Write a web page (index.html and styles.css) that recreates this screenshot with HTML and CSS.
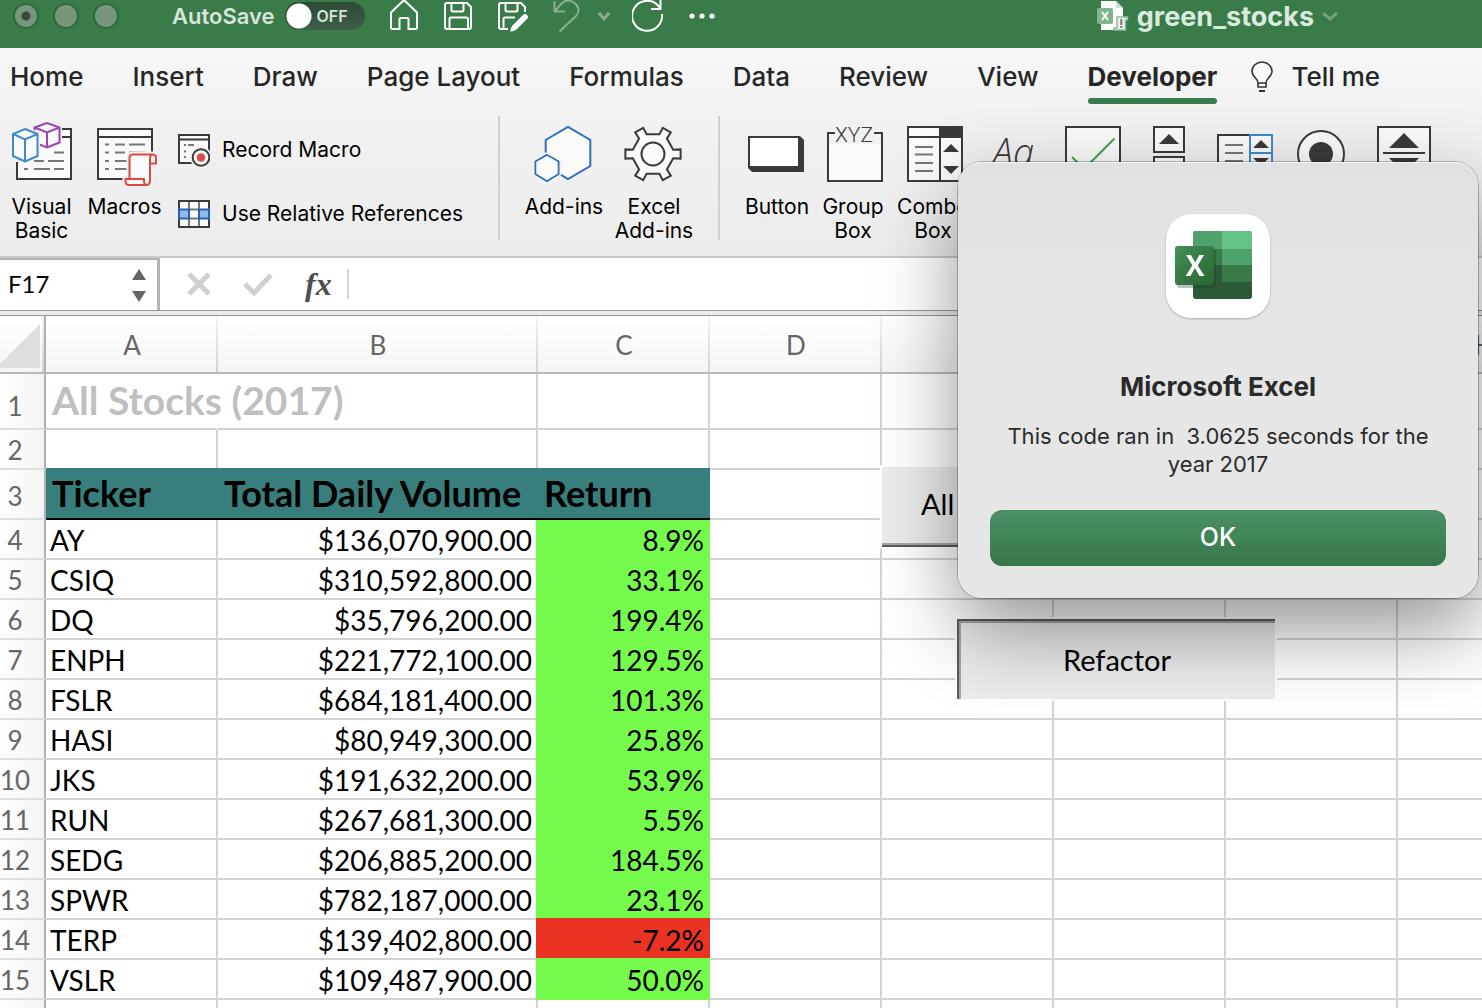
FILE: index.html
```html
<!DOCTYPE html>
<html lang="en">
<head>
<meta charset="utf-8">
<title>green_stocks</title>
<link rel="stylesheet" href="styles.css">
</head>
<body>
<header class="titlebar">
  <div class="lights">
    <button class="light light-close" aria-label="Close"></button>
    <button class="light" aria-label="Minimize"></button>
    <button class="light" aria-label="Zoom"></button>
  </div>
  <div class="autosave">
    <label for="autosave">AutoSave</label>
    <span class="toggle"><input type="checkbox" id="autosave"><span class="toggle-text">OFF</span></span>
  </div>
  <div class="quick">
    <button aria-label="Home"><svg width="32" height="32" viewBox="0 0 32 32"><path d="M3 12.500L16 0L29 12.500V27.500Q29 29 27.500 29H20.500V19Q20.500 18 19.500 18H12.500Q11.500 18 11.500 19V29H4.500Q3 29 3 27.500Z"/></svg></button>
    <button aria-label="Save"><svg width="32" height="32" viewBox="0 0 32 32"><path d="M5 3H25L29 7V27Q29 29 27 29H5Q3 29 3 27V5Q3 3 5 3ZM9.500 3V10Q9.500 11.500 11 11.500H20Q21.500 11.500 21.500 10V3M7.500 29V19Q7.500 17.500 9 17.500H24.500Q26 17.500 26 19V29"/></svg></button>
    <button aria-label="Save as"><svg width="32" height="32" viewBox="0 0 32 32"><path d="M12 29H5Q3 29 3 27V5Q3 3 5 3H25L29 7V12M9.500 3V10Q9.500 11.500 11 11.500H20Q21.500 11.500 21.500 10V3M7.500 29V19Q7.500 17.500 9 17.500H19"/><path class="solid" d="M27 15Q29 13 31 15Q33 17 31 19L20.500 29.500Q17 32 14.500 31.500Q14 29 16.500 25.500Z"/></svg></button>
    <div class="undo">
      <button aria-label="Undo"><svg width="32" height="32" viewBox="0 0 32 32"><path d="M4.500 1V11.500H15M5 11L11 4Q17-2 24 2.500Q32 9 26 16L9.500 31.500"/></svg></button>
      <button aria-label="Undo history"><svg width="12" height="32" viewBox="0 0 12 32"><path d="M1 13L6 19L11 13" stroke-width="3"/></svg></button>
    </div>
    <button aria-label="Redo"><svg width="32" height="32" viewBox="0 0 32 32"><path d="M30 14A15 15 0 1 1 26 5.500L28.500 8.500M28.500 0V9H19"/></svg></button>
    <button aria-label="More"><svg width="32" height="32" viewBox="0 0 32 32"><g class="solid"><circle cx="6" cy="16" r="2.600"/><circle cx="16" cy="16" r="2.600"/><circle cx="26" cy="16" r="2.600"/></g></svg></button>
  </div>
  <div class="docname">
    <svg width="32" height="32" viewBox="0 0 32 32"><path fill="#fff" d="M4 1H19L26 8V30H4Z"/><path fill="#cfdfd2" d="M19 1L26 8H19Z"/><rect y="8" width="16" height="16" rx="1.500" fill="#7fb58e"/><path d="M5 12L11 20M11 12L5 20" stroke="#fff" stroke-width="2"/><path d="M21 17H30.500V20H28.500V30H17V28H20V17Z" fill="#e9f2eb" stroke="#8fbf9c" stroke-width="1.500"/><path d="M24.300 19V25M24.300 26V28" stroke="#777" stroke-width="2"/></svg>
    <span>green_stocks</span>
    <svg width="16" height="32" viewBox="0 0 16 32"><path d="M1 13L8 19L15 13" fill="none" stroke="#6fa17c" stroke-width="3"/></svg>
  </div>
</header>

<nav class="tabs">
  <button>Home</button>
  <button>Insert</button>
  <button>Draw</button>
  <button>Page Layout</button>
  <button>Formulas</button>
  <button>Data</button>
  <button>Review</button>
  <button>View</button>
  <button class="active">Developer</button>
  <button class="tellme"><svg width="22" height="32" viewBox="0 0 22 32"><path d="M7 22C7 17 1 16 1 10.500A10 9.500 0 0 1 21 10.500C21 16 15 17 15 22ZM7 22V26H15V22" fill="#fafafa" stroke="#333" stroke-width="1.600"/><path d="M8 30H14" stroke="#333" stroke-width="2"/></svg>Tell me</button>
</nav>

<div class="ribbon">
  <div class="group group-code">
    <button class="tool"><svg class="icon" viewBox="0 0 64 64"><path fill="#fafafa" d="M7 7H61V57H7Z"/><path class="ink" d="M52 7H61V57H7V40M52 15H61"/><path class="lines" d="M44 30.500H54M24 39H34M38 39H54M14 47H18M24 47H40M44 47H54"/><path d="M37 1L49.500 5.500V20.500L37 25.500L24.500 20.500V5.500ZM24.500 5.500L37 10.500L49.500 5.500M37 10.500V25.500" stroke="#f1f1f1" stroke-width="5"/><path d="M37 1L49.500 5.500V20.500L37 25.500L24.500 20.500V5.500ZM24.500 5.500L37 10.500L49.500 5.500M37 10.500V25.500" fill="#fafafa" stroke="#9c47b0" stroke-width="2"/><path d="M15 7L27.500 12V34L15 39.500L3 34V12Z" stroke="#f1f1f1" stroke-width="5"/><path d="M15 7L27.500 12V34L15 39.500L3 34V12ZM3 12L15 17.500L27.500 12M15 17.500V39.500" fill="#fafafa" stroke="#3d8acb" stroke-width="2"/></svg><span>Visual<br>Basic</span></button>
    <button class="tool"><svg class="icon" viewBox="0 0 64 64"><path class="ink" fill="#fafafa" d="M5 7H59V57H5ZM5 15H59"/><path class="lines" d="M12 22.500H16M22 22.500H32M36 22.500H52M12 30.500H16M22 30.500H32M36 30.500H52M12 39H16M22 39H34M12 47H16M22 47H34"/><path d="M40 32.500H60Q63 33 63 36V41.500H57V59Q57 63 53 63H36Q32.500 63 32.500 59V57H36.500V36Q36.500 32.500 40 32.500Z" fill="#f1f1f1" stroke="#f1f1f1" stroke-width="6"/><path d="M40 32.500H60Q63 33 63 36V41.500H57V59Q57 63 53 63H36Q32.500 63 32.500 59V57H36.500V36Q36.500 32.500 40 32.500ZM57 41.500V36Q57 33 60 32.500M36.500 57H51V59Q51 63 54 63" fill="#fafafa" stroke="#dc4a43" stroke-width="2"/></svg><span>Macros</span></button>
    <div class="stack">
      <button class="row-tool"><svg width="32" height="34" viewBox="0 0 32 34"><path class="ink" fill="#fafafa" d="M1 2H31V30H1ZM1 6.500H31"/><path class="lines" d="M6 12H8M10 12H16M6 18.500H8M6 24H8"/><circle cx="23" cy="24.500" r="11" fill="#f1f1f1"/><circle cx="23" cy="24.500" r="8.300" class="ink" fill="#fafafa"/><circle cx="23" cy="24.500" r="4.200" fill="#dc4a43"/></svg>Record Macro</button>
      <button class="row-tool"><svg width="32" height="32" viewBox="0 0 32 32"><path fill="#fafafa" d="M1 3H31V29H1Z"/><path class="lines" d="M11 3V29M21 3V29M11 11.500H21M11 20.500H21"/><path class="ink" d="M1 3H31V29H1Z"/><path d="M1 11.500H11V20.500H1ZM21 11.500H31V20.500H21Z" fill="#92bce8" stroke="#2763b2" stroke-width="2"/></svg>Use Relative References</button>
    </div>
  </div>
  <div class="group group-addins">
    <button class="tool"><svg class="icon" viewBox="0 0 64 64"><path fill="#fafafa" d="M36 5L58 18V44L36 57L14 44V18Z"/><path fill="#f1f1f1" d="M15 29L30 38V56L15 64L0 56V38Z"/><path d="M13.700 30.500V18L36 5L58.300 18V44L36 57L29 52.800M15 33L26.500 39.500V52L15 59L3.500 52V39.500Z" fill="none" stroke="#2f6ebd" stroke-width="2"/><path d="M15 34L25.500 40V51.500L15 58L4.500 51.500V40Z" fill="#fafafa"/></svg><span>Add-ins</span></button>
    <button class="tool"><svg class="icon" viewBox="0 0 64 64"><g transform="translate(31 32)" class="ink" fill="#fafafa"><path d="M20.200-4.300L27.600-4.600V4.600L20.200 4.300L13.900 15.400L17.800 21.600L9.800 26.200L6.400 19.700H-6.400L-9.800 26.200L-17.800 21.600L-13.900 15.400L-20.200 4.300L-27.600 4.600V-4.600L-20.200-4.300L-13.900-15.400L-17.800-21.600L-9.800-26.200L-6.400-19.700H6.400L9.800-26.200L17.800-21.600L13.900-15.400Z"/><circle r="11.500"/></g></svg><span>Excel<br>Add-ins</span></button>
  </div>
  <div class="group group-controls">
    <button class="tool"><svg class="icon" viewBox="0 0 64 64"><path fill="#3a3a38" d="M3 14H55L59 18V50H7L3 46Z"/><path fill="#fff" d="M5 16H53V44H5Z"/></svg><span>Button</span></button>
    <button class="tool"><svg class="icon" viewBox="0 0 64 64"><path fill="#fafafa" d="M7 22H61V59H7Z"/><path class="ink" d="M14 11H7V59H61V11H53"/><text x="33" y="20" class="xyz">XYZ</text></svg><span>Group<br>Box</span></button>
    <button class="tool tool-wide"><svg class="icon" viewBox="0 0 64 64"><path class="ink" fill="#fafafa" d="M7 5H61V59H7ZM7 15H61M39 5V59"/><path fill="#3a3a38" d="M38 4H62V16H38ZM50 22L58 30H42ZM42 44H58L50 52Z"/><path class="lines" d="M14 25H32M14 32.500H32M14 41H32M14 49H32"/></svg><span>Combo<br>Box</span></button>
    <button class="tool tool-wide" aria-label="Label"><svg class="icon" viewBox="0 0 64 64"><text x="7" y="44" class="aa">Aa</text></svg></button>
    <button class="tool tool-narrow" aria-label="Check Box"><svg class="icon" viewBox="0 0 64 64"><path class="ink" fill="#fafafa" d="M5 5H59V59H5Z"/><path d="M11 35L23 47L53.500 16.500" fill="none" stroke="#4c9c54" stroke-width="2"/></svg></button>
    <button class="tool tool-wide" aria-label="Scroll Bar"><svg class="icon" viewBox="0 0 64 64"><path class="ink" fill="#fafafa" d="M17 5H47V30H17ZM17 35H47V59H17Z"/><path fill="#3a3a38" d="M32 12L42 22H22Z"/></svg></button>
    <button class="tool tool-narrow" aria-label="List Box"><svg class="icon" viewBox="0 0 64 64"><path class="ink" fill="#fafafa" d="M37 13H5V59H37"/><path class="lines" d="M12 23H30M12 31H30M12 39H30"/><path d="M37 13H59V59H37ZM37 31H59" fill="#fafafa" stroke="#3d8acb" stroke-width="2"/><path fill="#3a3a38" d="M48 18L56 26H40ZM40 36H56L48 44Z"/></svg></button>
    <button class="tool tool-wide" aria-label="Option Button"><svg class="icon" viewBox="0 0 64 64"><circle class="ink" fill="#fafafa" cx="32" cy="32" r="23"/><circle fill="#3a3a38" cx="32" cy="32" r="12"/></svg></button>
    <button class="tool tool-wide" aria-label="Spinner"><svg class="icon" viewBox="0 0 64 64"><path class="ink" fill="#fafafa" d="M5 5H57V59H5ZM10 31H52"/><path fill="#3a3a38" d="M31 11L46 26H16ZM16 36H46L31 51Z"/></svg></button>
  </div>
</div>

<div class="formula-bar">
  <div class="namebox">
    <input type="text" value="F17" aria-label="Name box">
    <button aria-label="Recent names"><svg width="16" height="36" viewBox="0 0 16 36"><path fill="#666" d="M8 2L15 13H1ZM1 24H15L8 35Z"/></svg></button>
  </div>
  <button aria-label="Cancel"><svg width="32" height="32" viewBox="0 0 32 32"><path d="M4 6L24 26M24 6L4 26" stroke="#d0d0d0" stroke-width="5"/></svg></button>
  <button aria-label="Enter"><svg width="32" height="32" viewBox="0 0 32 32"><path d="M3 16L12 25L29 7" fill="none" stroke="#d0d0d0" stroke-width="5"/></svg></button>
  <button class="fx" aria-label="Insert function">fx</button>
  <input class="formula" type="text" aria-label="Formula">
</div>

<main class="sheet">
  <table>
    <colgroup><col class="c-head"><col class="c-std"><col class="c-wide"><col class="c-std"><col class="c-std"><col class="c-std"><col class="c-std"><col class="c-std"><col class="c-std"></colgroup>
    <thead>
      <tr><td class="corner"><svg width="40" height="44" viewBox="0 0 40 44"><path fill="#dedede" d="M40 0V44H0V40Z"/></svg></td><th scope="col">A</th><th scope="col">B</th><th scope="col">C</th><th scope="col">D</th><th scope="col">E</th><th scope="col">F</th><th scope="col">G</th><th scope="col">H</th></tr>
    </thead>
    <tbody>
      <tr class="r-title"><th scope="row">1</th><td class="title">All Stocks (2017)</td><td></td><td></td><td></td><td></td><td></td><td></td><td></td></tr>
      <tr><th scope="row">2</th><td></td><td></td><td></td><td></td><td></td><td></td><td></td><td></td></tr>
      <tr class="r-heads"><th scope="row">3</th><td class="head">Ticker</td><td class="head">Total Daily Volume</td><td class="head">Return</td><td></td><td></td><td></td><td></td><td></td></tr>
      <tr><th scope="row">4</th><td>AY</td><td class="num">$136,070,900.00</td><td class="num up">8.9%</td><td></td><td></td><td></td><td></td><td></td></tr>
      <tr><th scope="row">5</th><td>CSIQ</td><td class="num">$310,592,800.00</td><td class="num up">33.1%</td><td></td><td></td><td></td><td></td><td></td></tr>
      <tr><th scope="row">6</th><td>DQ</td><td class="num">$35,796,200.00</td><td class="num up">199.4%</td><td></td><td></td><td></td><td></td><td></td></tr>
      <tr><th scope="row">7</th><td>ENPH</td><td class="num">$221,772,100.00</td><td class="num up">129.5%</td><td></td><td></td><td></td><td></td><td></td></tr>
      <tr><th scope="row">8</th><td>FSLR</td><td class="num">$684,181,400.00</td><td class="num up">101.3%</td><td></td><td></td><td></td><td></td><td></td></tr>
      <tr><th scope="row">9</th><td>HASI</td><td class="num">$80,949,300.00</td><td class="num up">25.8%</td><td></td><td></td><td></td><td></td><td></td></tr>
      <tr><th scope="row">10</th><td>JKS</td><td class="num">$191,632,200.00</td><td class="num up">53.9%</td><td></td><td></td><td></td><td></td><td></td></tr>
      <tr><th scope="row">11</th><td>RUN</td><td class="num">$267,681,300.00</td><td class="num up">5.5%</td><td></td><td></td><td></td><td></td><td></td></tr>
      <tr><th scope="row">12</th><td>SEDG</td><td class="num">$206,885,200.00</td><td class="num up">184.5%</td><td></td><td></td><td></td><td></td><td></td></tr>
      <tr><th scope="row">13</th><td>SPWR</td><td class="num">$782,187,000.00</td><td class="num up">23.1%</td><td></td><td></td><td></td><td></td><td></td></tr>
      <tr class="r-down"><th scope="row">14</th><td>TERP</td><td class="num">$139,402,800.00</td><td class="num down">-7.2%</td><td></td><td></td><td></td><td></td><td></td></tr>
      <tr><th scope="row">15</th><td>VSLR</td><td class="num">$109,487,900.00</td><td class="num up">50.0%</td><td></td><td></td><td></td><td></td><td></td></tr>
      <tr><th scope="row"></th><td></td><td></td><td></td><td></td><td></td><td></td><td></td><td></td></tr>
    </tbody>
  </table>
  <button class="sheet-button all-button">All</button>
  <button class="sheet-button refactor-button">Refactor</button>
</main>

<section class="alert" role="alertdialog" aria-labelledby="alert-title" aria-describedby="alert-text">
  <svg class="app-icon" width="104" height="104" viewBox="0 0 104 104">
    <defs><linearGradient id="badge" x1="0" y1="0" x2="1" y2="1"><stop offset="0" stop-color="#438f57"/><stop offset="1" stop-color="#296531"/></linearGradient><clipPath id="book"><rect x="27" y="17" width="59" height="68" rx="3"/></clipPath></defs>
    <rect width="104" height="104" rx="25" fill="#fff"/>
    <g clip-path="url(#book)"><path fill="#2c5a38" d="M27 17H86V85H27Z"/><path fill="#4fa26c" d="M27 17H56V35H27ZM56 35H86V51H56Z"/><path fill="#65c286" d="M56 17H86V35H56Z"/><path fill="#397a49" d="M27 35H56V51H27ZM56 51H86V68H56Z"/></g>
    <rect x="11" y="35" width="39" height="39" rx="3" fill="#1c3d22" opacity=".3"/>
    <rect x="9" y="32" width="39" height="39" rx="3" fill="url(#badge)"/>
    <text x="29" y="62" class="badge-text">X</text>
  </svg>
  <h1 id="alert-title">Microsoft Excel</h1>
  <p id="alert-text">This code ran in&nbsp; 3.0625 seconds for the year 2017</p>
  <button class="ok">OK</button>
</section>
</body>
</html>
```
FILE: styles.css
```css
* { box-sizing: border-box; }

body {
  margin: 0;
  height: 100vh;
  overflow: hidden;
  background: #fff;
  font-family: Inter, "Liberation Sans", sans-serif;
  color: #000;
}

button, input {
  font: inherit;
  color: inherit;
  margin: 0;
  padding: 0;
  border: 0;
  background: none;
}

svg { display: block; flex: none; }

/* Title bar */
.titlebar {
  display: flex;
  align-items: center;
  height: 48px;
  padding: 0 144px 16px 13px;
  background: #397b49;
}
.lights { display: flex; gap: 14px; }
.light {
  width: 26px;
  height: 26px;
  border-radius: 50%;
  border: 2px solid #2f6a3c;
  background: #76977e;
}
.light-close { background: radial-gradient(circle, #36483a 4px, #76977e 5px); }
.autosave {
  display: flex;
  align-items: center;
  gap: 10px;
  margin-left: 53px;
  font-size: 22px;
  font-weight: 600;
  color: #d7e5da;
}
.toggle { position: relative; width: 80px; height: 28px; }
.toggle input {
  display: block;
  appearance: none;
  width: 80px;
  height: 28px;
  border-radius: 14px;
  background: radial-gradient(circle at 14px 14px, #fff 12px, transparent 13px), linear-gradient(#2a4a33, #3f5f48);
}
.toggle-text {
  position: absolute;
  left: 32px;
  top: 0;
  font-size: 16px;
  line-height: 28px;
  pointer-events: none;
}
.quick { display: flex; align-items: center; gap: 22px; margin-left: 23px; }
.quick svg { fill: none; stroke: #fff; stroke-width: 2; }
.quick .solid { fill: #fff; stroke: none; }
.undo { display: flex; gap: 16px; opacity: .4; }
.docname {
  display: flex;
  align-items: center;
  gap: 8px;
  margin-left: auto;
  font-size: 27px;
  font-weight: 700;
  color: #dceadf;
}

/* Ribbon tabs */
.tabs {
  display: flex;
  align-items: flex-start;
  gap: 49px;
  height: 62px;
  padding: 8px 10px 0;
  background: linear-gradient(#f7f7f7, #f2f2f2);
  font-size: 26px;
  line-height: 42px;
  font-weight: 500;
  color: #262626;
  white-space: nowrap;
}
.tabs .active { font-weight: 700; }
.tabs .active::after {
  content: "";
  display: block;
  height: 6px;
  border-radius: 3px;
  background: #397b49;
}
.tabs .tellme { display: flex; align-items: center; gap: 18px; margin-left: -15px; }

/* Ribbon */
.ribbon {
  display: flex;
  height: 148px;
  padding-top: 6px;
  border-bottom: 2px solid #c9c9c9;
  background: linear-gradient(#f2f2f2, #ececec);
  font-size: 21px;
  line-height: 24px;
}
.group {
  display: flex;
  align-items: flex-start;
  height: 124px;
  padding-top: 6px;
  border-right: 2px solid #d0d0d0;
}
.group-code { width: 500px; flex: none; }
.group-addins { width: 220px; flex: none; justify-content: center; }
.group-controls { padding-left: 19px; border-right: 0; }
.tool {
  display: flex;
  flex-direction: column;
  align-items: center;
  flex: none;
  gap: 9px;
  width: 76px;
}
.group-code .tool { width: 83px; }
.group-addins .tool { width: 90px; }
.tool-wide { width: 84px; }
.tool-narrow { width: 68px; }
.icon { width: 64px; height: 64px; fill: none; }
.ink { stroke: #3a3a38; stroke-width: 2; }
.lines { fill: none; stroke: #767672; stroke-width: 2; }
.xyz { font: 300 21px Roboto, sans-serif; fill: #3a3a38; text-anchor: middle; }
.aa { font: italic 300 38px "Open Sans", sans-serif; fill: #3a3a38; }
.stack { display: flex; flex-direction: column; gap: 8px; padding-left: 12px; }
.stack svg { fill: none; }
.row-tool { display: flex; align-items: center; gap: 12px; height: 56px; white-space: nowrap; }

/* Formula bar */
.formula-bar {
  display: flex;
  align-items: center;
  height: 58px;
  padding-bottom: 6px;
  gap: 25px;
  background: linear-gradient(#979797 0 1px, #ececec 1px 5px, #979797 5px 6px) 0 100% / 100% 6px no-repeat, #fff;
}
.namebox {
  display: flex;
  align-items: center;
  justify-content: space-between;
  align-self: stretch;
  width: 160px;
  padding: 0 10px 0 8px;
  border: solid #b4b4b4;
  border-width: 2px 3px 0 0;
  font: 24px Lato, sans-serif;
}
.namebox input { width: 100px; padding-bottom: 3px; }
.namebox svg { margin-left: 4px; }
.formula-bar .fx {
  padding: 0 6px;
  font: italic 700 32px "Liberation Serif", serif;
  color: #4d4d4d;
}
.formula {
  flex: 1;
  height: 30px;
  margin-left: -16px;
  border-left: 2px solid #d8d8d8;
}

/* Worksheet */
.sheet {
  position: relative;
  overflow: hidden;
  font-family: Lato, Carlito, sans-serif;
  font-size: 28px;
  line-height: 36px;
}
table { table-layout: fixed; width: 1570px; border-collapse: separate; border-spacing: 0; }
.c-head { width: 46px; }
.c-std { width: 172px; }
.c-wide { width: 320px; }
td, th {
  height: 40px;
  padding: 0 4px;
  border: solid #d3d3d3;
  border-width: 0 2px 2px 0;
  vertical-align: bottom;
  text-align: left;
  white-space: nowrap;
}
th { font-size: 26px; font-weight: 400; color: #666; text-align: center; }
thead th, .corner {
  height: 58px;
  padding-bottom: 9px;
  border-bottom-color: #b8b8b8;
  background: linear-gradient(#f4f4f4, #d3d3d3) 100% 0 / 2px 100% no-repeat, linear-gradient(#fff, #f5f5f5);
}
thead th { padding: 0 4px 9px; border-right: 0; }
thead .corner { padding: 0 0 4px; border-right-color: #b0b0b0; }
tbody th {
  padding: 0 14px 0 0;
  border-right-color: #b0b0b0;
  border-bottom-color: #dedede;
  background: linear-gradient(90deg, #fff, #f4f4f4);
}
.r-title > * { height: 56px; padding-bottom: 4px; }
.r-heads > * { height: 50px; padding-bottom: 4px; }
.r-title .title {
  font-size: 39px;
  font-weight: 700;
  line-height: 48px;
  color: #bfbfbf;
  border-right-color: transparent;
  padding-left: 6px;
}
.r-heads .head {
  padding: 0 0 4px 6px;
  font-size: 36px;
  font-weight: 700;
  line-height: 42px;
  background: #377e7d;
  border-bottom-color: #000;
  border-right-width: 0;
  box-shadow: 0 -2px #377e7d;
}
.num { text-align: right; }
.up, .down { padding-right: 6px; border: 0; border-bottom: 2px solid; }
.up { background: #75fb4c; border-color: #75fb4c; box-shadow: -2px 0 #75fb4c; }
.down { background: #ea3323; border-color: #75fb4c; box-shadow: -2px 0 #ea3323, 0 -2px #ea3323, -2px -2px #ea3323; }
.r-down + tr .up { box-shadow: -2px 0 #75fb4c, -2px -2px #75fb4c; }
.sheet-button {
  position: absolute;
  height: 80px;
  background: #ececec;
  outline: 2px solid #fff;
  font-size: 29px;
}
.all-button {
  left: 882px;
  top: 151px;
  width: 318px;
  padding: 0 0 4px 39px;
  text-align: left;
  border-bottom: 2px solid #5a5a5a;
  box-shadow: inset 0 -2px #a6a6a6;
}
.refactor-button {
  left: 957px;
  top: 303px;
  width: 318px;
  border: solid #5a5a5a;
  border-width: 2px 0 0 2px;
  box-shadow: inset 2px 2px #a6a6a6;
}

/* Message box */
.alert {
  position: absolute;
  right: 4px;
  top: 162px;
  width: 520px;
  padding: 52px 32px 32px;
  border-radius: 24px;
  background: linear-gradient(#e1e1e1, #e6e6e6 40%);
  box-shadow: inset 0 1px #f6f6f6, 0 0 0 1px rgba(0, 0, 0, .25), 0 32px 80px rgba(0, 0, 0, .42);
  text-align: center;
  color: #2a2a2a;
}
.app-icon { margin: 0 auto; filter: drop-shadow(0 1px 1px rgba(0, 0, 0, .25)); }
.badge-text { font: 700 28px "Open Sans", sans-serif; fill: #fff; text-anchor: middle; }
.alert h1 { margin: 53px 0 19px; font-size: 26px; line-height: 32px; font-weight: 700; }
.alert p { margin: 0 0 32px; font-size: 22px; line-height: 28px; }
.ok {
  display: block;
  width: 100%;
  height: 56px;
  padding-bottom: 2px;
  border-radius: 12px;
  background: linear-gradient(#4c9066, #36774a);
  color: #fff;
  font-size: 25px;
  font-weight: 500;
}
```
